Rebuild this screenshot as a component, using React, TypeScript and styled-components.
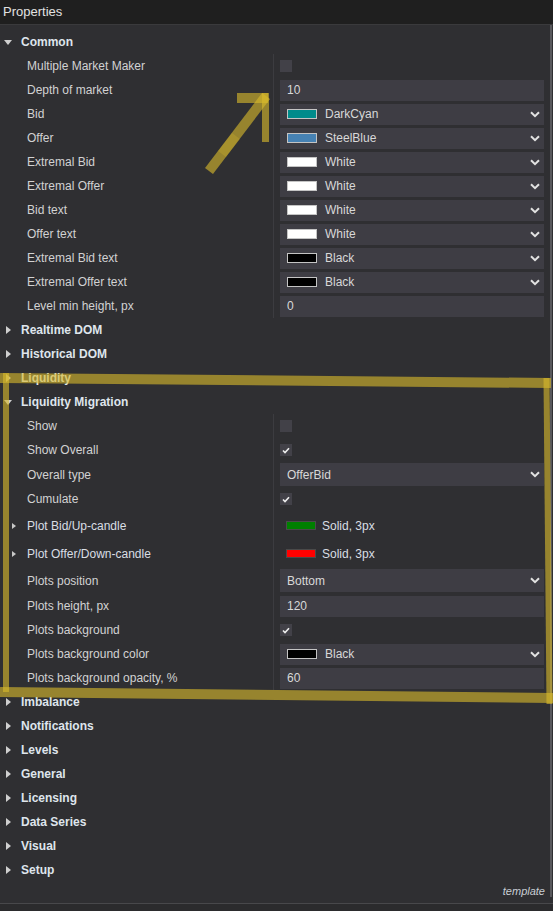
import React from "react";
import styled, { createGlobalStyle } from "styled-components";

const Global = createGlobalStyle`
  html, body { margin: 0; padding: 0; background: #2f2f32; }
  body { font-family: "Liberation Sans", Arial, sans-serif; font-size: 12px; }
  * { box-sizing: border-box; }
`;

const Page = styled.div`
  position: relative;
  width: 553px;
  height: 911px;
  background: #2f2f32;
  display: flex;
  flex-direction: column;
  overflow: hidden;
`;

const Header = styled.div`
  height: 25px;
  flex: none;
  background: #1f1f1f;
  border-bottom: 1px solid #3a3a3c;
  color: #e2e2e2;
  font-size: 13px;
  display: flex;
  align-items: center;
  padding: 0 0 2px 3px;
`;

const Main = styled.div`
  flex: none;
  height: 878px;
  display: flex;
`;

const Content = styled.div`
  flex: 1;
  display: flex;
  flex-direction: column;
  padding-top: 5px;
`;

const ScrollTrack = styled.div`
  width: 3px;
  flex: none;
  display: flex;
  justify-content: flex-start;
`;

const ScrollThumb = styled.div`
  width: 2px;
  height: 872px;
  background: #58585c;
`;

const Footer = styled.div`
  flex: 1;
  display: flex;
  justify-content: flex-end;
  align-items: flex-start;
  padding: 3px 5px 0 0;
  color: #c9ced4;
  font-size: 11px;
  font-style: italic;
`;

const BottomBar = styled.div`
  height: 8px;
  flex: none;
  border-top: 1px solid #48484b;
  background: #2b2b2d;
`;

/* ----- category rows ----- */

const CategoryRow = styled.div`
  height: 24px;
  display: flex;
  align-items: center;
  color: #dfe5ec;
  font-weight: bold;
  font-size: 12px;
`;

const CaretSlot = styled.div`
  width: 21px;
  height: 24px;
  display: flex;
  align-items: center;
  padding-left: 4px;
`;

const CaretDown = styled.div`
  width: 0;
  height: 0;
  border-left: 4px solid transparent;
  border-right: 4px solid transparent;
  border-top: 5px solid #cfcfcf;
`;

const CaretRight = styled.div<{ $size?: number }>`
  width: 0;
  height: 0;
  margin-left: 2px;
  border-top: ${(p) => p.$size ?? 4}px solid transparent;
  border-bottom: ${(p) => p.$size ?? 4}px solid transparent;
  border-left: ${(p) => (p.$size ?? 4) + 1}px solid #cfcfcf;
`;

/* ----- property rows ----- */

const Row = styled.div<{ $h?: number }>`
  height: ${(p) => p.$h ?? 24}px;
  display: grid;
  grid-template-columns: 273px 1fr;
`;

const Label = styled.div<{ $sub?: boolean }>`
  display: flex;
  align-items: center;
  padding-left: ${(p) => (p.$sub ? 12 : 27)}px;
  color: ${(p) => (p.$sub ? "#d9dee4" : "#d2d2d2")};
  font-size: 12px;
  white-space: nowrap;
`;

const SubCaret = styled.div`
  width: 0;
  height: 0;
  margin-right: 11px;
  border-top: 3px solid transparent;
  border-bottom: 3px solid transparent;
  border-left: 4px solid #c8c8c8;
`;

const Value = styled.div`
  border-left: 1px solid #3c3c40;
  padding: 0 6px;
  display: flex;
  align-items: center;
`;

const Field = styled.div<{ $h?: number }>`
  width: 100%;
  height: ${(p) => p.$h ?? 21}px;
  background: #3e3d44;
  display: flex;
  align-items: center;
  padding: 0 4px 0 7px;
  color: #d8d8d8;
  font-size: 12px;
`;

const Swatch = styled.div<{ $c: string }>`
  width: 30px;
  height: 10px;
  background: ${(p) => p.$c};
  border: 1px solid #c4c4c4;
  margin-right: 8px;
  flex: none;
`;

const PlotSwatch = styled.div<{ $c: string }>`
  width: 30px;
  height: 9px;
  background: ${(p) => p.$c};
  border: 1px solid #4a4a4a;
  margin: 0 6px 0 6px;
  flex: none;
`;

const PlotText = styled.span`
  color: #d9dee4;
  font-size: 12px;
`;

const Box = styled.div`
  width: 12px;
  height: 12px;
  background: #424148;
  display: flex;
  align-items: center;
  justify-content: center;
`;

const ChevronWrap = styled.div`
  margin-left: auto;
  width: 10px;
  height: 7px;
  display: flex;
`;

const Chevron = () => (
  <ChevronWrap>
    <svg width="10" height="7" viewBox="0 0 10 7">
      <path d="M1 1.2 L5 5.2 L9 1.2" fill="none" stroke="#e2e2e2" strokeWidth="2" />
    </svg>
  </ChevronWrap>
);

const Check = () => (
  <svg width="8" height="7" viewBox="0 0 8 7">
    <path d="M1 3.5 L3 5.5 L7 1.2" fill="none" stroke="#eeeeee" strokeWidth="1.6" />
  </svg>
);

const Overlay = styled.svg`
  position: absolute;
  left: 0;
  top: 0;
  width: 553px;
  height: 911px;
  pointer-events: none;
`;

type Prop =
  | { kind: "check"; label: string; on: boolean; h?: number }
  | { kind: "text"; label: string; value: string; h?: number }
  | { kind: "select"; label: string; value: string; h?: number; fh?: number }
  | { kind: "color"; label: string; value: string; color: string; h?: number }
  | { kind: "plot"; label: string; color: string; h?: number };

const renderValue = (p: Prop) => {
  switch (p.kind) {
    case "check":
      return <Box>{p.on && <Check />}</Box>;
    case "text":
      return <Field>{p.value}</Field>;
    case "select":
      return (
        <Field $h={p.fh}>
          {p.value}
          <Chevron />
        </Field>
      );
    case "color":
      return (
        <Field>
          <Swatch $c={p.color} />
          {p.value}
          <Chevron />
        </Field>
      );
    case "plot":
      return (
        <>
          <PlotSwatch $c={p.color} />
          <PlotText>Solid, 3px</PlotText>
        </>
      );
  }
};

const PropRow = ({ p }: { p: Prop }) => (
  <Row $h={p.h}>
    <Label $sub={p.kind === "plot"}>
      {p.kind === "plot" && <SubCaret />}
      {p.label}
    </Label>
    <Value>{renderValue(p)}</Value>
  </Row>
);

const Category = ({ title, open }: { title: string; open?: boolean }) => (
  <CategoryRow>
    <CaretSlot>{open ? <CaretDown /> : <CaretRight />}</CaretSlot>
    {title}
  </CategoryRow>
);

const common: Prop[] = [
  { kind: "check", label: "Multiple Market Maker", on: false },
  { kind: "text", label: "Depth of market", value: "10" },
  { kind: "color", label: "Bid", value: "DarkCyan", color: "#008b8b" },
  { kind: "color", label: "Offer", value: "SteelBlue", color: "#4682b4" },
  { kind: "color", label: "Extremal Bid", value: "White", color: "#ffffff" },
  { kind: "color", label: "Extremal Offer", value: "White", color: "#ffffff" },
  { kind: "color", label: "Bid text", value: "White", color: "#ffffff" },
  { kind: "color", label: "Offer text", value: "White", color: "#ffffff" },
  { kind: "color", label: "Extremal Bid text", value: "Black", color: "#000000" },
  { kind: "color", label: "Extremal Offer text", value: "Black", color: "#000000" },
  { kind: "text", label: "Level min height, px", value: "0" },
];

const migration: Prop[] = [
  { kind: "check", label: "Show", on: false },
  { kind: "check", label: "Show Overall", on: true },
  { kind: "select", label: "Overall type", value: "OfferBid", h: 25, fh: 23 },
  { kind: "check", label: "Cumulate", on: true },
  { kind: "plot", label: "Plot Bid/Up-candle", color: "#008000", h: 29 },
  { kind: "plot", label: "Plot Offer/Down-candle", color: "#ff0000", h: 27 },
  { kind: "select", label: "Plots position", value: "Bottom", h: 27, fh: 23 },
  { kind: "text", label: "Plots height, px", value: "120" },
  { kind: "check", label: "Plots background", on: true },
  { kind: "color", label: "Plots background color", value: "Black", color: "#000000" },
  { kind: "text", label: "Plots background opacity, %", value: "60" },
];

const collapsedTail = [
  "Imbalance",
  "Notifications",
  "Levels",
  "General",
  "Licensing",
  "Data Series",
  "Visual",
  "Setup",
];

const Y = "#d9b92c";

export default function App() {
  return (
    <Page>
      <Global />
      <Header>Properties</Header>
      <Main>
        <Content>
          <Category title="Common" open />
          {common.map((p) => (
            <PropRow key={p.label} p={p} />
          ))}
          <Category title="Realtime DOM" />
          <Category title="Historical DOM" />
          <Category title="Liquidity" />
          <Category title="Liquidity Migration" open />
          {migration.map((p) => (
            <PropRow key={p.label} p={p} />
          ))}
          {collapsedTail.map((t) => (
            <Category key={t} title={t} />
          ))}
          <Footer>template</Footer>
        </Content>
        <ScrollTrack>
          <ScrollThumb />
        </ScrollTrack>
      </Main>
      <BottomBar />

      {/* hand-drawn highlight marks */}
      <Overlay viewBox="0 0 553 911">
        <g stroke={Y} strokeOpacity="0.62" fill="none" strokeLinecap="butt">
          <line x1="209" y1="171" x2="266" y2="96" strokeWidth="10" />
          <line x1="222" y1="154" x2="236" y2="136" strokeWidth="10" strokeOpacity="0.25" />
          <line x1="237" y1="98" x2="268" y2="98" strokeWidth="10" />
          <line x1="265.5" y1="93" x2="265.5" y2="142" strokeWidth="7" />

          <line x1="0" y1="378" x2="551" y2="383" strokeWidth="10" />
          <line x1="546.5" y1="378" x2="549.5" y2="704" strokeWidth="6" />
          <line x1="0" y1="692" x2="553" y2="698" strokeWidth="10" />
          <line x1="6" y1="373" x2="6" y2="692" strokeWidth="6" />
        </g>
      </Overlay>
    </Page>
  );
}
